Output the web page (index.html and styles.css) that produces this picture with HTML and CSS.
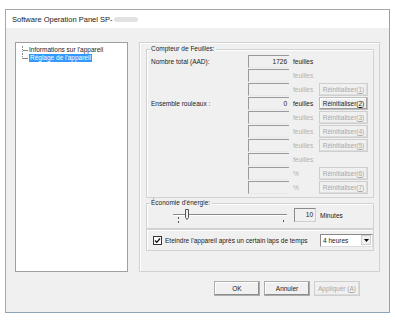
FILE: index.html
```html
<!DOCTYPE html>
<html lang="fr">
<head>
    <meta charset="UTF-8">
    <title>Software Operation Panel</title>
    <link rel="stylesheet" href="styles.css">
</head>
<body>

<div class="window">
    <div class="titlebar">Software Operation Panel SP-<span class="blur"></span></div>
    <div class="client">
        <div class="main">
            <div class="tree">
                <div class="node"><span class="branch"></span><span>Informations sur l'appareil</span></div>
                <div class="node"><span class="branch last"></span><span class="sel">Réglage de l'appareil</span></div>
            </div>

            <div class="panel">
                <fieldset class="group counter">
                    <legend>Compteur de Feuilles:</legend>
                    <div class="rows">
                        <span class="lbl">Nombre total (AAD):</span><span class="box">1726</span><span class="unit on">feuilles</span><span></span>
                        <span></span><span class="box"></span><span class="unit">feuilles</span><span></span>
                        <span></span><span class="box"></span><span class="unit">feuilles</span><button class="reset" disabled>Réinitialiser(<u>1</u>)</button>
                        <span class="lbl">Ensemble rouleaux :</span><span class="box">0</span><span class="unit on">feuilles</span><button class="reset">Réinitialiser(<u>2</u>)</button>
                        <span></span><span class="box"></span><span class="unit">feuilles</span><button class="reset" disabled>Réinitialiser(<u>3</u>)</button>
                        <span></span><span class="box"></span><span class="unit">feuilles</span><button class="reset" disabled>Réinitialiser(<u>4</u>)</button>
                        <span></span><span class="box"></span><span class="unit">feuilles</span><button class="reset" disabled>Réinitialiser(<u>5</u>)</button>
                        <span></span><span class="box"></span><span class="unit">feuilles</span><span></span>
                        <span></span><span class="box"></span><span class="unit">%</span><button class="reset" disabled>Réinitialiser(<u>6</u>)</button>
                        <span></span><span class="box"></span><span class="unit">%</span><button class="reset" disabled>Réinitialiser(<u>7</u>)</button>
                    </div>
                </fieldset>

                <fieldset class="group eco">
                    <legend>Économie d'énergie:</legend>
                    <div class="eco-row">
                        <svg class="slider" width="118" height="16" viewBox="0 0 118 16">
                            <line x1="2" y1="7.5" x2="116" y2="7.5" stroke="#8a8a8a"/>
                            <line x1="2" y1="8.5" x2="116" y2="8.5" stroke="#ffffff"/>
                            <path d="M14.5 2.5 h3 v8 l-1.5 2 l-1.5 -2 z" fill="#f0f0f0" stroke="#555"/>
                            <line x1="7.5" y1="10" x2="7.5" y2="12" stroke="#555"/>
                            <line x1="7.5" y1="14" x2="7.5" y2="16" stroke="#555"/>
                            <line x1="112.5" y1="13" x2="112.5" y2="15" stroke="#555"/>
                        </svg>
                        <span class="box small">10</span>
                        <span class="on">Minutes</span>
                    </div>
                </fieldset>

                <div class="group off">
                    <svg class="check" width="9" height="9" viewBox="0 0 9 9">
                        <rect x="0.5" y="0.5" width="8" height="8" fill="#fff" stroke="#333"/>
                        <path d="M2 4.5 L3.8 6.3 L7 2.5" fill="none" stroke="#111" stroke-width="1.3"/>
                    </svg>
                    <span class="off-label">Eteindre l'appareil après un certain laps de temps</span>
                    <div class="select">
                        <span>4 heures</span>
                        <span class="arrow"><svg width="5" height="3" viewBox="0 0 5 3"><path d="M0 0 h5 l-2.5 3 z" fill="#000"/></svg></span>
                    </div>
                </div>
            </div>
        </div>

        <div class="buttons">
            <button class="btn">OK</button>
            <button class="btn">Annuler</button>
            <button class="btn" disabled>Appliquer (<u>A</u>)</button>
        </div>
    </div>
</div>

</body>
</html>
```

FILE: styles.css
```css
* {
    box-sizing: border-box;
}
body {
    margin: 0;
    background-color: white;
    font-family: "Liberation Sans", Arial, sans-serif;
    font-size: 6.5px;
    color: #1a1a1a;
}
.window {
    margin: 9px 0 0 5px;
    width: 385px;
    height: 304px;
    border: 1px solid #a8a8a8;
    border-right-color: #8fa3b6;
    border-bottom-color: #8fa3b6;
    display: flex;
    flex-direction: column;
}
.titlebar {
    background-color: white;
    height: 18px;
    padding-left: 6px;
    font-size: 7.5px;
    display: flex;
    align-items: center;
}
.blur {
    display: inline-block;
    width: 24px;
    height: 5px;
    margin-left: 2px;
    background-color: #e2e2e2;
    border-radius: 3px;
}
.client {
    flex: 1;
    background-color: #f0f0f0;
    padding: 14px 9px 0 9px;
}
.main {
    display: flex;
    gap: 11px;
    height: 230px;
}
.tree {
    width: 115px;
    background-color: white;
    border: 1px solid #a0a0a0;
    padding: 3px 0 0 6px;
}
.node {
    display: flex;
    align-items: center;
    height: 8px;
    line-height: 8px;
    white-space: nowrap;
}
.branch {
    width: 6px;
    height: 8px;
    margin-right: 1px;
    border-left: 1px dotted #8c8c8c;
    background: linear-gradient(#8c8c8c, #8c8c8c) left 4px / 6px 1px no-repeat;
}
.branch.last {
    height: 5px;
    align-self: flex-start;
}
.sel {
    background-color: #3399ff;
    color: white;
    padding: 0 1px;
}
.panel {
    flex: 1;
    border: 1px solid #d2d2d2;
    box-shadow: inset 1px 1px 0 white;
    padding: 2px 5px 0 6px;
}
.group {
    margin: 0;
    padding: 0;
    min-inline-size: 0;
    border: 1px solid #d2d2d2;
    box-shadow: inset 1px 1px 0 white;
}
.group legend {
    padding: 0 1px;
    margin-left: 3px;
    line-height: 8px;
}
.counter {
    height: 153px;
}
.rows {
    display: grid;
    grid-template-columns: 97px 41px 30px 49px;
    grid-auto-rows: 14px;
    align-items: center;
    padding: 1px 0 0 4px;
}
.box {
    height: 13px;
    line-height: 12px;
    border-top: 1px solid #9a9a9a;
    border-left: 1px solid #9a9a9a;
    border-bottom: 1px solid #e8e8e8;
    text-align: right;
    padding-right: 2px;
}
.unit {
    color: #b0b0b0;
    padding-left: 4px;
}
.on {
    color: #1a1a1a;
}
.reset, .btn {
    font-family: inherit;
    font-size: 6.5px;
    background-color: #f0f0f0;
    border: 1px solid #bdbdbd;
    box-shadow: inset -1px -1px 0 #a0a0a0, inset 1px 1px 0 white;
    color: #1a1a1a;
    padding: 0;
    white-space: nowrap;
}
.reset {
    height: 13px;
}
.reset:disabled, .btn:disabled {
    color: #a8a8a8;
    border-color: #cfcfcf;
    box-shadow: inset -1px -1px 0 #dcdcdc;
}
.eco {
    margin-top: 1px;
    height: 30px;
}
.eco-row {
    display: flex;
    align-items: center;
    padding-left: 24px;
}
.slider {
    margin-right: 5px;
}
.box.small {
    width: 22px;
    height: 14px;
    border: 1px solid #8a8a8a;
    border-bottom-color: #cfcfcf;
    border-right-color: #cfcfcf;
    margin-right: 4px;
}
.off {
    height: 22px;
    display: flex;
    align-items: center;
    padding-left: 6px;
    gap: 3px;
    white-space: nowrap;
}
.off-label {
    width: 152px;
}
.select {
    width: 53px;
    height: 13px;
    background-color: white;
    border: 1px solid #8a8a8a;
    border-bottom-color: #dcdcdc;
    border-right-color: #dcdcdc;
    display: flex;
    justify-content: space-between;
    align-items: center;
    padding-left: 2px;
}
.arrow {
    width: 10px;
    height: 10px;
    background-color: #f0f0f0;
    border: 1px solid #cfcfcf;
    display: flex;
    align-items: center;
    justify-content: center;
    margin-right: 1px;
}
.buttons {
    display: flex;
    justify-content: flex-end;
    gap: 4px;
    padding: 9px 20px 0 0;
}
.btn {
    width: 46px;
    height: 15px;
    border-color: #adadad;
    box-shadow: inset -1px -1px 0 #8c8c8c, inset 1px 1px 0 white;
}
```
